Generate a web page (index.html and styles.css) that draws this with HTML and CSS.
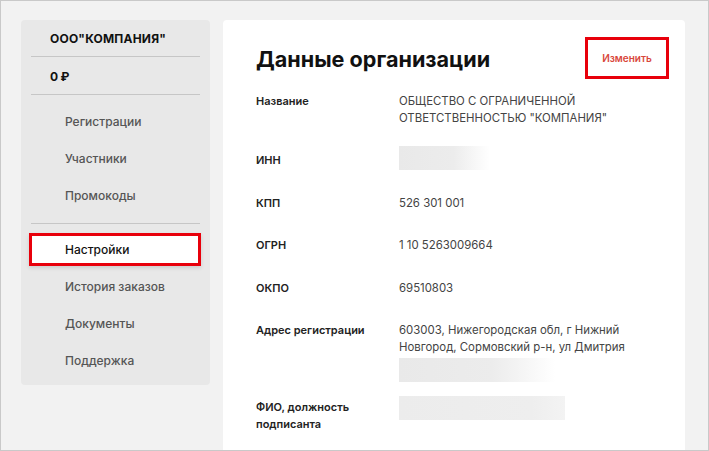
FILE: index.html
```html
<!DOCTYPE html>
<html lang="ru">
<head>
<meta charset="utf-8">
<link rel="stylesheet" href="styles.css">
</head>
<body>
<div class="frame">
  <aside class="sidebar">
    <div class="side-head">ООО"КОМПАНИЯ"</div>
    <div class="divider"></div>
    <div class="side-head balance">0&#8201;₽</div>
    <div class="divider"></div>
    <nav class="menu menu-top">
      <div class="item">Регистрации</div>
      <div class="item">Участники</div>
      <div class="item">Промокоды</div>
    </nav>
    <div class="divider"></div>
    <nav class="menu menu-bottom">
      <div class="item active">Настройки</div>
      <div class="item">История заказов</div>
      <div class="item">Документы</div>
      <div class="item">Поддержка</div>
    </nav>
  </aside>
  <main class="card">
    <div class="card-head">
      <h1 class="title">Данные организации</h1>
      <button class="edit-btn">Изменить</button>
    </div>
    <div class="rows">
      <div class="label">Название</div>
      <div class="value">ОБЩЕСТВО С ОГРАНИЧЕННОЙ<br>ОТВЕТСТВЕННОСТЬЮ "КОМПАНИЯ"</div>

      <div class="label">ИНН</div>
      <div class="value"><div class="blur blur-inn"></div></div>

      <div class="label">КПП</div>
      <div class="value">526 301 001</div>

      <div class="label">ОГРН</div>
      <div class="value">1 10 5263009664</div>

      <div class="label">ОКПО</div>
      <div class="value">69510803</div>

      <div class="label">Адрес регистрации</div>
      <div class="value">603003, Нижегородская обл, г Нижний<br>Новгород, Сормовский р-н, ул Дмитрия<div class="blur blur-addr"></div></div>

      <div class="label">ФИО, должность<br>подписанта</div>
      <div class="value"><div class="blur blur-fio"></div></div>
    </div>
  </main>
</div>
</body>
</html>
```
FILE: styles.css
```css
* { box-sizing: border-box; }
html, body { margin: 0; padding: 0; }
body {
  font-family: Inter, "Noto Sans", sans-serif;
  color: #222;
}
.frame {
  width: 709px;
  height: 451px;
  border: 1px solid #c9c9c9;
  background: #f2f2f2;
  overflow: hidden;
  display: flex;
  align-items: flex-start;
  gap: 13px;
  padding: 19px 0 0 20px;
}
.sidebar {
  width: 189px;
  flex: none;
  background: #e8e8e8;
  border-radius: 4px;
  display: flex;
  flex-direction: column;
}
.side-head {
  height: 36px;
  display: flex;
  align-items: center;
  padding-left: 29px;
  font-size: 12px;
  font-weight: 700;
  color: #111;
  letter-spacing: 0.2px;
}
.side-head.balance { height: 37px; padding-top: 1px; }
.divider {
  height: 1px;
  background: #c6c6c6;
  margin: 0 10px;
}
.menu { display: flex; flex-direction: column; }
.menu-top { padding: 8px 0 9px; }
.menu-bottom { padding: 9px 0 6px; }
.item {
  height: 37px;
  display: flex;
  align-items: center;
  padding-left: 44px;
  font-size: 12px;
  font-weight: 500;
  color: #555;
}
.item.active {
  height: 33px;
  margin: 0 9px 2px 8px;
  padding-left: 33px;
  background: #fff;
  border: 3px solid #e8000b;
  color: #111;
  box-shadow: 0 2px 4px rgba(0,0,0,0.12);
}
.card {
  width: 462px;
  height: 460px;
  flex: none;
  background: #fff;
  border-radius: 4px;
  padding: 17px 16px 0 33px;
}
.card-head {
  display: flex;
  align-items: center;
  justify-content: space-between;
}
.title {
  margin: 0;
  font-size: 21.6px;
  font-weight: 700;
  color: #111;
  padding-top: 2px;
}
.edit-btn {
  width: 84px;
  height: 42px;
  background: #fff;
  border: 3px solid #e8000b;
  color: #d9473b;
  font-family: inherit;
  font-size: 10px;
  font-weight: 600;
  padding: 0;
}
.rows {
  display: grid;
  grid-template-columns: 143px 1fr;
  row-gap: 25.5px;
  margin-top: 13.5px;
  font-size: 11px;
  line-height: 17px;
}
.label { font-weight: 600; color: #222; }
.value { color: #444; font-size: 11.4px; }
.blur {
  height: 24px;
  background: linear-gradient(90deg, #e9e9e9 0%, #ececec 60%, #ffffff 100%);
}
.blur-inn { width: 91px; margin-top: -6px; margin-bottom: -1px; }
.blur-addr { width: 156px; margin-top: 1.5px; margin-bottom: -8.5px; }
.blur-fio { width: 166px; margin-top: -2.5px; background: linear-gradient(90deg, #ececec 0%, #eeeeee 80%, #f3f3f3 100%); }
```
